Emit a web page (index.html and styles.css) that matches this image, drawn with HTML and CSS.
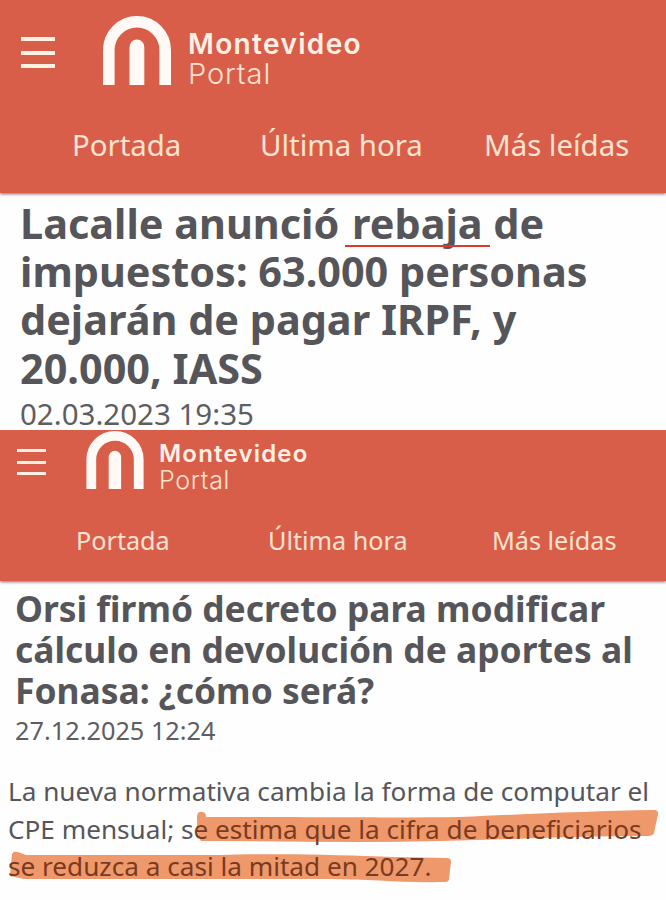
FILE: index.html
```html
<!DOCTYPE html>
<html lang="es">
<head>
    <meta charset="UTF-8">
    <meta name="viewport" content="width=device-width, initial-scale=1.0">
    <title>Montevideo Portal</title>
    <link rel="stylesheet" href="styles.css">
</head>
<body>

<section class="clip clip-first">
    <header class="site-header">
        <div class="top-bar">
            <div class="menu-icon"><span></span><span></span><span></span></div>
            <svg class="logo" viewBox="0 0 68 69">
                <path d="M5.8 69V34a28.2 28.2 0 0 1 56.4 0V69" fill="none" stroke="#fffaf5" stroke-width="11.6"/>
                <path d="M26.5 69V31a7.4 7.4 0 0 1 14.8 0V69Z" fill="#fffaf5"/>
            </svg>
            <div class="brand">
                <strong>Montevideo</strong>
                <span>Portal</span>
            </div>
        </div>
        <nav class="nav">
            <a>Portada</a>
            <a>Última hora</a>
            <a>Más leídas</a>
        </nav>
    </header>
    <article>
        <h1>Lacalle anunció <span class="underlined">rebaja</span> de<br>impuestos: 63.000 personas<br>dejarán de pagar IRPF, y<br>20.000, IASS</h1>
        <time>02.03.2023 19:35</time>
    </article>
</section>

<section class="clip clip-second">
    <header class="site-header">
        <div class="top-bar">
            <div class="menu-icon"><span></span><span></span><span></span></div>
            <svg class="logo" viewBox="0 0 68 69">
                <path d="M5.8 69V34a28.2 28.2 0 0 1 56.4 0V69" fill="none" stroke="#fffaf5" stroke-width="11.6"/>
                <path d="M26.5 69V31a7.4 7.4 0 0 1 14.8 0V69Z" fill="#fffaf5"/>
            </svg>
            <div class="brand">
                <strong>Montevideo</strong>
                <span>Portal</span>
            </div>
        </div>
        <nav class="nav">
            <a>Portada</a>
            <a>Última hora</a>
            <a>Más leídas</a>
        </nav>
    </header>
    <article>
        <h1>Orsi firmó decreto para modificar<br>cálculo en devolución de aportes al<br>Fonasa: ¿cómo será?</h1>
        <time>27.12.2025 12:24</time>
        <div class="summary">
            <!-- marker strokes behind the text -->
            <svg class="marker" viewBox="0 0 666 130">
                <path d="M197 44Q198 39 202 40Q206 40 206 45C330 45 400 46 460 45C530 42 590 39 655 38Q658 38 658 42L654 61Q653 64 648 64C560 64 510 68 440 69C360 71 280 69 201 69Q197 64 197 44Z"/>
                <path d="M12 82Q13 79 18 80L26 83H220C290 81 340 83 394 85L447 86Q451 86 451 90L449 107Q449 110 445 110C400 111 370 107 330 107H24L10 104Z"/>
            </svg>
            <p>La nueva normativa cambia la forma de computar el<br>CPE mensual; s<span class="marked">e estima que la cifra de beneficiarios</span><br><span class="marked">se reduzca a casi la mitad en 2027.</span></p>
        </div>
    </article>
</section>

</body>
</html>
```

FILE: styles.css
```css
/* Global styles */
* {
    box-sizing: border-box;
}

body {
    margin: 0;
    width: 666px;
    height: 900px;
    overflow: hidden;
    background: #fefefe;
    color: #56565a;
    font-family: 'Noto Sans', 'Open Sans', sans-serif;
}

.clip {
    overflow: hidden;
}

.site-header {
    background: #d95e4a;
    color: #fde3d0;
    box-shadow: 0 1px 3px rgba(80, 30, 60, 0.7);
}

.top-bar {
    display: flex;
    align-items: flex-start;
}

.menu-icon {
    display: flex;
    flex-direction: column;
    justify-content: space-between;
}

.menu-icon span {
    background: #fff0e4;
}

.logo {
    display: block;
}

.brand {
    display: flex;
    flex-direction: column;
    font-family: Inter, sans-serif;
    white-space: nowrap;
}

.brand strong {
    font-weight: 600;
    color: #fff0e4;
}

.brand span {
    font-weight: 300;
}

.nav {
    display: flex;
    white-space: nowrap;
}

h1 {
    margin: 0;
    font-weight: 700;
    white-space: nowrap;
}

time {
    display: block;
    color: #5e5e62;
}

/* First clipping */
.clip-first {
    height: 430px;
}

.clip-first .site-header {
    height: 193px;
}

.clip-first .top-bar {
    height: 126px;
    padding: 16px 0 0 21px;
}

.clip-first .menu-icon {
    width: 34px;
    height: 31px;
    margin: 21px 48px 0 0;
}

.clip-first .menu-icon span {
    height: 4px;
}

.clip-first .logo {
    width: 68px;
    height: 69px;
}

.clip-first .brand {
    margin: 13px 0 0 17px;
}

.clip-first .brand strong {
    font-size: 28px;
    line-height: 30px;
    letter-spacing: 1.35px;
}

.clip-first .brand span {
    font-size: 29px;
    line-height: 30px;
    letter-spacing: 0.9px;
}

.clip-first .nav {
    padding-left: 72px;
    font-size: 29.4px;
    line-height: 38px;
}

.clip-first .nav a:nth-child(1) {
    width: 188px;
}

.clip-first .nav a:nth-child(2) {
    width: 224px;
}

.clip-first article {
    padding: 6px 0 0 20px;
}

.clip-first h1 {
    font-size: 41.4px;
    line-height: 48.2px;
}

.underlined {
    position: relative;
    margin-left: 2px;
}

.underlined::after {
    content: "";
    position: absolute;
    left: -7px;
    right: -7px;
    bottom: 4px;
    height: 2.5px;
    background: #d93a2b;
}

.clip-first time {
    font-size: 29.5px;
    line-height: 38px;
    margin-top: 3px;
}

/* Second clipping */
.clip-second {
    height: 470px;
}

.clip-second .site-header {
    height: 151px;
}

.clip-second .top-bar {
    height: 93px;
    padding: 1px 0 0 17px;
}

.clip-second .menu-icon {
    width: 29px;
    height: 26px;
    margin: 18px 40px 0 0;
}

.clip-second .menu-icon span {
    height: 3px;
}

.clip-second .logo {
    width: 58px;
    height: 58px;
}

.clip-second .brand {
    margin: 10px 0 0 15px;
}

.clip-second .brand strong {
    font-size: 24px;
    line-height: 26px;
    letter-spacing: 1.2px;
}

.clip-second .brand span {
    font-size: 25px;
    line-height: 26px;
    letter-spacing: 0.7px;
}

.clip-second .nav {
    padding-left: 76px;
    font-size: 25.2px;
    line-height: 34px;
}

.clip-second .nav a:nth-child(1) {
    width: 192px;
}

.clip-second .nav a:nth-child(2) {
    width: 224px;
}

.clip-second article {
    padding: 7px 0 0 15px;
}

.clip-second h1 {
    font-size: 35.4px;
    line-height: 41px;
}

.clip-second time {
    margin-top: 1px;
    font-size: 25.3px;
    line-height: 36px;
}

.summary {
    position: relative;
    margin: 24px 0 0 -15px;
    padding: 1px 0 0 8px;
    font-size: 26.17px;
    line-height: 37.7px;
    white-space: nowrap;
}

.summary p {
    position: relative;
    margin: 0;
}

.marker {
    position: absolute;
    left: 0;
    top: 0;
    width: 666px;
    height: 130px;
    fill: #ee986b;
}

.marked {
    color: #7a3a1e;
}
```
